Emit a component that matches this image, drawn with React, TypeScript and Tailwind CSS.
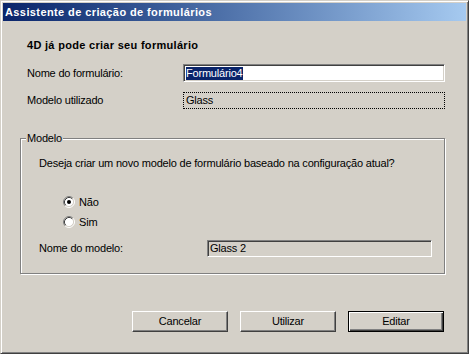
import React from "react";

function Radio({ checked }: { checked: boolean }) {
  return (
    <svg width="12" height="12" viewBox="0 0 12 12" className="shrink-0">
      <circle cx="6" cy="6" r="4.5" fill="#fff" />
      <path d="M2.11 9.89 A5.5 5.5 0 0 1 9.89 2.11" stroke="#808080" strokeWidth="1" fill="none" />
      <path d="M9.89 2.11 A5.5 5.5 0 0 1 2.11 9.89" stroke="#ffffff" strokeWidth="1" fill="none" />
      <path d="M2.82 9.18 A4.5 4.5 0 0 1 9.18 2.82" stroke="#404040" strokeWidth="1" fill="none" />
      <path d="M9.18 2.82 A4.5 4.5 0 0 1 2.82 9.18" stroke="#d4d0c8" strokeWidth="1" fill="none" />
      {checked && <circle cx="6" cy="6" r="2" fill="#000" />}
    </svg>
  );
}

function Button({ label, isDefault }: { label: string; isDefault?: boolean }) {
  return (
    <div
      className={
        isDefault
          ? "w-[96px] h-[21px] flex items-center justify-center border border-black shadow-[inset_1px_1px_0_#fff,inset_-1px_-1px_0_#404040,inset_-2px_-2px_0_#808080]"
          : "w-[96px] h-[21px] flex items-center justify-center border border-t-white border-l-white border-r-[#404040] border-b-[#404040] shadow-[inset_-1px_-1px_0_#808080]"
      }
    >
      {label}
    </div>
  );
}

export default function App() {
  return (
    <div className="w-[469px] h-[354px] bg-[#d4d0c8] border border-t-[#d4d0c8] border-l-[#d4d0c8] border-r-[#404040] border-b-[#404040] shadow-[inset_1px_1px_0_#fff,inset_-1px_-1px_0_#808080] p-[2px] flex flex-col font-['Liberation_Sans',Arial,sans-serif] text-[11px] tracking-[-0.2px] text-black leading-none">
      <div className="h-[18px] shrink-0 bg-linear-to-r from-[#0a246a] to-[#a6caf0] flex items-center pl-[2px] text-white font-bold tracking-[0.4px]">
        Assistente de criação de formulários
      </div>

      <div className="mt-[15px] h-[18px] flex items-center pl-[24px] font-bold tracking-[0.3px]">
        4D já pode criar seu formulário
      </div>

      <div className="mt-[10px] h-[18px] flex items-center pl-[24px]">
        <div className="w-[156px]">Nome do formulário:</div>
        <div className="w-[262px] h-[18px] bg-white border border-t-[#808080] border-l-[#808080] border-r-white border-b-white shadow-[inset_1px_1px_0_#404040,inset_-1px_-1px_0_#d4d0c8] flex items-center pl-[2px]">
          <span className="bg-[#0a246a] text-white h-[13px] flex items-center">Formulário4</span>
        </div>
      </div>

      <div className="mt-[10px] h-[17px] flex items-center pl-[24px]">
        <div className="w-[156px]">Modelo utilizado</div>
        <div className="w-[262px] h-[17px] border border-dotted border-black flex items-center pl-[2px]">
          Glass
        </div>
      </div>

      <div className="mt-[29px] ml-[17px] w-[425px] relative border border-[#808080] shadow-[1px_1px_0_#fff,inset_1px_1px_0_#fff] pt-[16px] pl-[18px] pb-[16px]">
        <div className="absolute left-[5px] top-[-7px] h-[12px] bg-[#d4d0c8] px-[1px] flex items-center">
          Modelo
        </div>
        <div className="h-[16px] flex items-center">
          Deseja criar um novo modelo de formulário baseado na configuração atual?
        </div>
        <div className="mt-[23px] h-[16px] flex items-center pl-[24px] gap-[4px]">
          <Radio checked />
          <span>Não</span>
        </div>
        <div className="mt-[4px] h-[16px] flex items-center pl-[24px] gap-[4px]">
          <Radio checked={false} />
          <span>Sim</span>
        </div>
        <div className="mt-[10px] h-[17px] flex items-center">
          <div className="w-[168px]">Nome do modelo:</div>
          <div className="w-[225px] h-[17px] border border-t-[#808080] border-l-[#808080] border-r-white border-b-white shadow-[inset_1px_1px_0_#404040,inset_-1px_-1px_0_#d4d0c8] flex items-center pl-[2px]">
            Glass 2
          </div>
        </div>
      </div>

      <div className="mt-[37px] flex justify-end gap-[12px] pr-[22px]">
        <Button label="Cancelar" />
        <Button label="Utilizar" />
        <Button label="Editar" isDefault />
      </div>
    </div>
  );
}
